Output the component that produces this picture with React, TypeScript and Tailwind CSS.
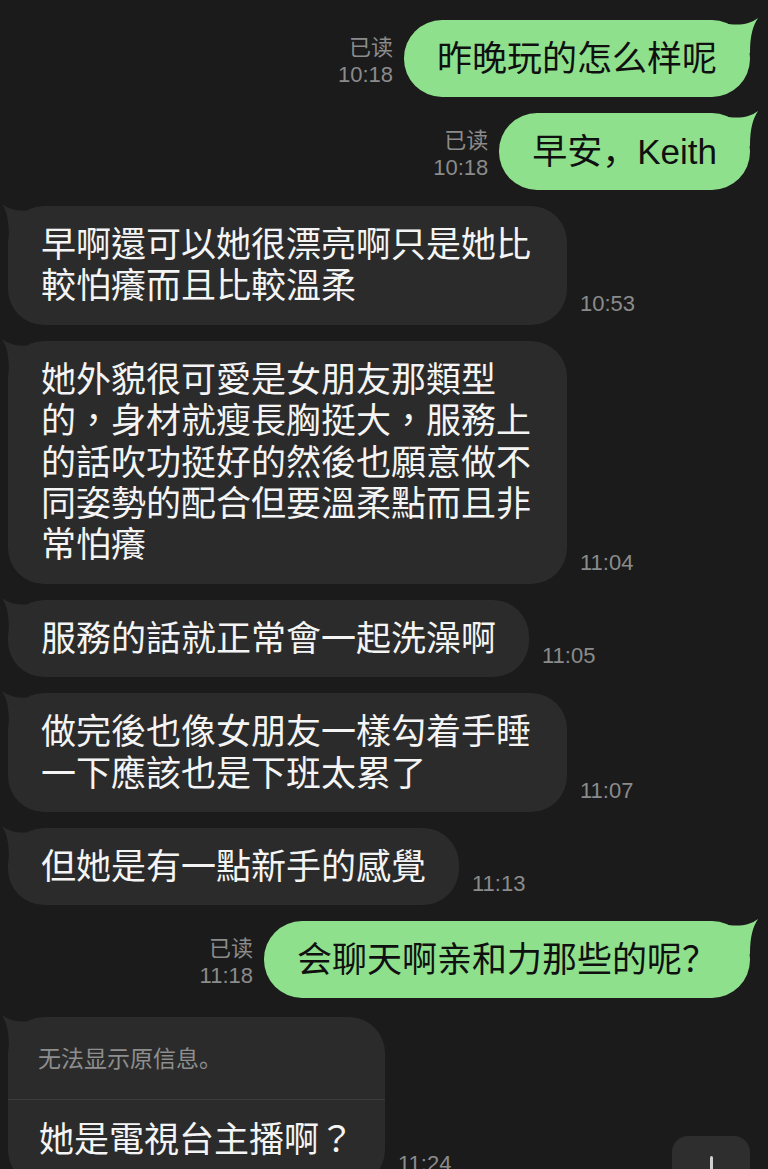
import React from 'react';

const msgFont = { fontFamily: '"Liberation Sans", "Noto Sans CJK TC", sans-serif' };
const msgFontSc = { fontFamily: '"Liberation Sans", "Noto Sans CJK SC", sans-serif' };

const GreenTail = () => (
  <svg className="absolute -right-[9px] -top-[3px]" width="40" height="40" viewBox="0 0 40 40">
    <path d="M4 6 C 18 9, 30 8, 39 1 C 34 9, 31 18, 31 36 L 4 36 Z" fill="#8fe08c" />
  </svg>
);

const GrayTail = () => (
  <svg className="absolute -left-[7px] -top-[3px]" width="40" height="40" viewBox="0 0 40 40">
    <path d="M36 6 C 22 9, 10 8, 1 1 C 6 9, 8 18, 8 36 L 36 36 Z" fill="#2b2b2b" />
  </svg>
);

const Outgoing: React.FC<{ time: string; text: string }> = ({ time, text }) => (
  <div className="flex justify-end items-end gap-[11px] pr-[18px]">
    <div className="text-right text-[22px] leading-[27px] mb-[9px] text-[#8b8b8b]" style={msgFontSc}>
      <div>已读</div>
      <div>{time}</div>
    </div>
    <div className="relative bg-[#8fe08c] rounded-[38px] px-[33px] py-[18px]">
      <GreenTail />
      <div className="relative text-[35px] leading-[41px] text-[#101010]" style={msgFontSc}>{text}</div>
    </div>
  </div>
);

const Incoming: React.FC<{ time: string; text: string }> = ({ time, text }) => (
  <div className="flex items-end gap-[13px] pl-[8px]">
    <div className="relative bg-[#2b2b2b] rounded-[36px] px-[33px] py-[18px]">
      <GrayTail />
      <div className="relative max-w-[493px] text-[35px] leading-[41.4px] text-[#f4f4f4]" style={msgFont}>{text}</div>
    </div>
    <div className="text-[22px] leading-[27px] mb-[8px] text-[#8b8b8b] shrink-0" style={msgFont}>{time}</div>
  </div>
);

export default function App() {
  return (
    <div className="relative bg-[#1b1b1b] w-[768px] h-[1169px] overflow-hidden">
      <div className="flex flex-col gap-[16px] pt-[20px]">
        <Outgoing time="10:18" text="昨晚玩的怎么样呢" />
        <Outgoing time="10:18" text="早安，Keith" />
        <Incoming time="10:53" text="早啊還可以她很漂亮啊只是她比較怕癢而且比較溫柔" />
        <Incoming time="11:04" text="她外貌很可愛是女朋友那類型的，身材就瘦長胸挺大，服務上的話吹功挺好的然後也願意做不同姿勢的配合但要溫柔點而且非常怕癢" />
        <Incoming time="11:05" text="服務的話就正常會一起洗澡啊" />
        <Incoming time="11:07" text="做完後也像女朋友一樣勾着手睡一下應該也是下班太累了" />
        <Incoming time="11:13" text="但她是有一點新手的感覺" />
        <Outgoing time="11:18" text="会聊天啊亲和力那些的呢？" />

        {/* reply to a message that can't be shown */}
        <div className="flex items-end gap-[13px] pl-[8px] mt-[3px]">
          <div className="relative bg-[#2b2b2b] rounded-[36px]">
            <GrayTail />
            <div className="relative px-[30px] pt-[26px] pb-[23px] text-[23px] leading-[33px] text-[#8e8e8e]" style={msgFontSc}>
              无法显示原信息。
            </div>
            <div className="relative h-px bg-[#3c3c3c]" />
            <div className="relative px-[31px] pt-[19px] pb-[26px] text-[35px] leading-[41px] text-[#f4f4f4]" style={msgFont}>
              她是電視台主播啊？
            </div>
          </div>
          <div className="text-[22px] leading-[27px] mb-[9px] text-[#8b8b8b] shrink-0" style={msgFont}>11:24</div>
        </div>
      </div>

      {/* scroll to bottom button */}
      <div className="absolute right-[18px] top-[1136px] w-[78px] h-[78px] rounded-[16px] bg-[#2e2e2e] flex justify-center">
        <div className="mt-[20px] w-[3px] h-[30px] rounded-full bg-[#d0d0d0]" />
      </div>
    </div>
  );
}
